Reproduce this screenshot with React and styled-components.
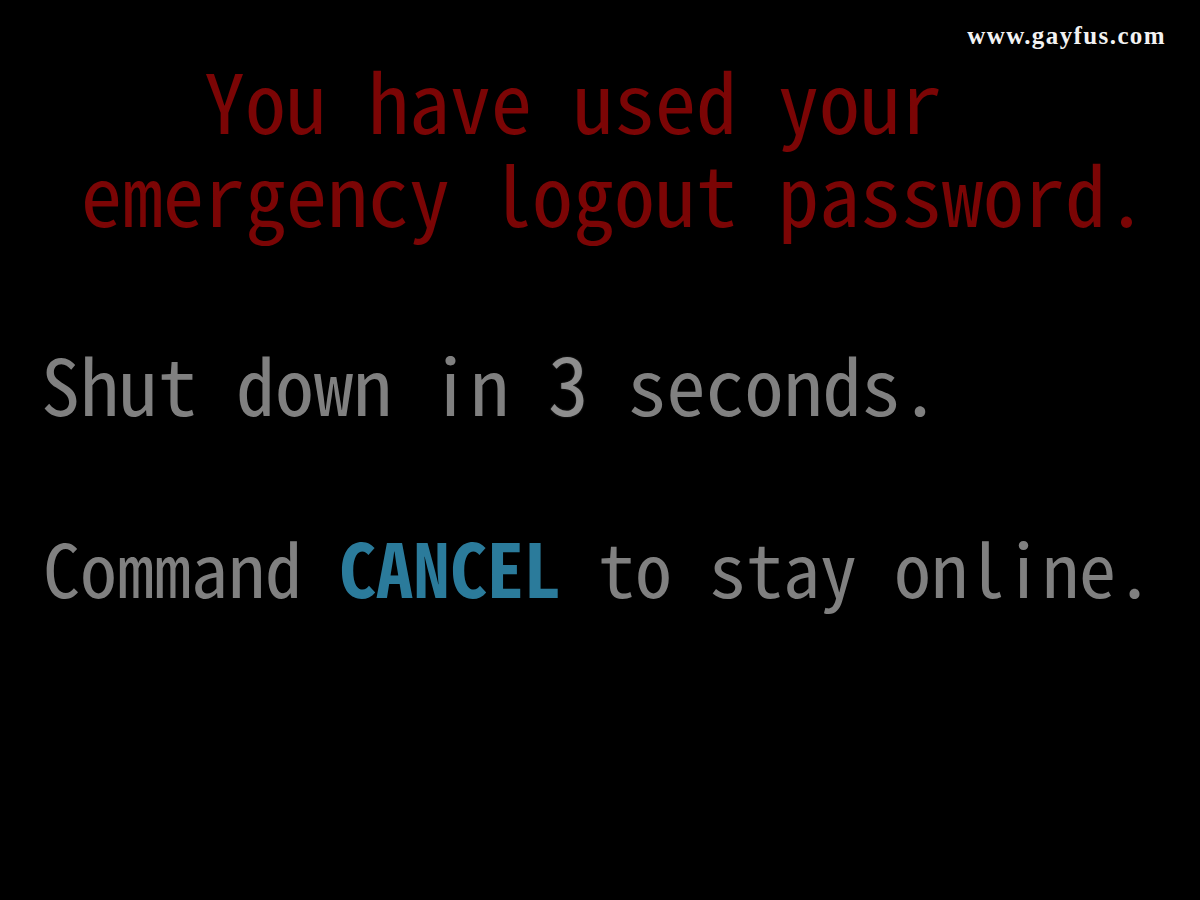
import React from 'react'
import styled, { createGlobalStyle } from 'styled-components'

const GlobalStyle = createGlobalStyle`
    html, body {
        margin: 0;
        padding: 0;
        background: #000;
    }
    #root {
        min-height: 100vh;
    }
`;

const App = () => {
    return (
        <Screen>
            <GlobalStyle />
            <Watermark>www.gayfus.com</Watermark>
            <Warning>
                <Line size={82} indent={81} top={58}>{'   You have used your'}</Line>
                <Line size={82} indent={81} top={11}>emergency logout password.</Line>
            </Warning>
            <Message>
                <Line size={78} indent={41} top={110}>
                    Shut down in <Count>3</Count> seconds.
                </Line>
                <Line size={74} indent={43} top={108}>
                    Command <Keyword>CANCEL</Keyword> to stay online.
                </Line>
            </Message>
        </Screen>
    )
}

export default App

const Screen = styled.div`
    position: relative;
    width: 1200px;
    height: 900px;
    overflow: hidden;
    background: #000;
    display: flex;
    flex-direction: column;
    font-family: "Noto Sans Mono CJK JP", "Noto Sans CJK JP", "DejaVu Sans Mono", monospace;
`;

const Watermark = styled.div`
    position: absolute;
    top: 22px;
    right: 34px;
    font-family: "Liberation Serif", "DejaVu Serif", serif;
    font-weight: bold;
    font-size: 25px;
    letter-spacing: 1.4px;
    color: #f2f2f2;
`;

const Warning = styled.div`
    display: flex;
    flex-direction: column;
    color: #7b0505;
`;

const Message = styled.div`
    display: flex;
    flex-direction: column;
    color: #808080;
`;

const Line = styled.div`
    white-space: pre;
    font-size: ${props => props.size}px;
    line-height: 1;
    margin-top: ${props => props.top}px;
    padding-left: ${props => props.indent}px;
`;

const Count = styled.span`
    color: #8e8e8e;
    text-shadow: 0 0 2px #3a3a3a, 0 0 1px #000;
    font-size: 1.04em;
    line-height: 0;
`;

const Keyword = styled.span`
    color: #2b7b9b;
    font-weight: bold;
`;
